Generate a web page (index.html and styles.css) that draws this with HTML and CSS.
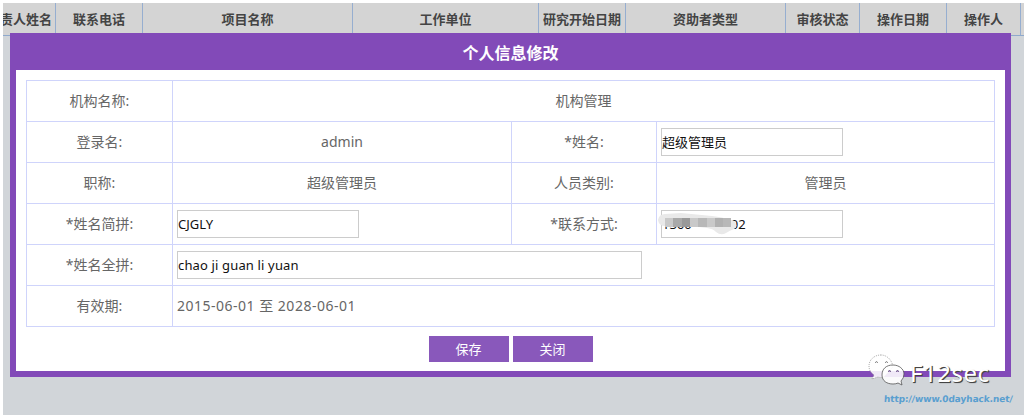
FILE: index.html
```html
<!DOCTYPE html>
<html lang="zh-CN">
<head>
<meta charset="utf-8">
<title>个人信息修改</title>
<link rel="stylesheet" href="styles.css">
</head>
<body>
<div class="page">
  <div class="list-head">
    <div class="col col-owner"><span>责人姓名</span></div>
    <div class="col">联系电话</div>
    <div class="col">项目名称</div>
    <div class="col">工作单位</div>
    <div class="col">研究开始日期</div>
    <div class="col">资助者类型</div>
    <div class="col">审核状态</div>
    <div class="col">操作日期</div>
    <div class="col">操作人</div>
    <div class="col"></div>
  </div>
  <div class="dialog">
    <div class="dialog-title">个人信息修改</div>
    <div class="dialog-body">
      <div class="form">
        <div class="cell">机构名称:</div><div class="cell wide">机构管理</div>
        <div class="cell">登录名:</div><div class="cell">admin</div><div class="cell">*姓名:</div><div class="cell field"><div class="input">超级管理员</div></div>
        <div class="cell">职称:</div><div class="cell">超级管理员</div><div class="cell">人员类别:</div><div class="cell">管理员</div>
        <div class="cell">*姓名简拼:</div><div class="cell field"><div class="input">CJGLY</div></div><div class="cell">*联系方式:</div>
        <div class="cell field"><div class="input phone">1360<span class="phone-end">02</span></div>
          <svg class="smudge" width="84" height="28" viewBox="0 0 84 28">
            <path d="M1 11Q2 5 8 5L24 4L55 7Q70 9 77 12Q82 17 77 20Q72 22 69 24Q64 27 59 23Q57 20 50 19L34 17L20 16L8 17Q2 17 1 11Z" fill="#e9e9e9"/>
            <path d="M8 9h8v9h-8zM32 9h9v9h-9z" fill="#c9c9c9"/>
            <path d="M16 9h9v9h-9z" fill="#a9a9a9"/>
            <path d="M25 9h8v9h-8z" fill="#999"/>
            <path d="M41 9h9v9h-9zM66 9h8v9h-8z" fill="#b8b8b8"/>
            <path d="M50 9h8v9h-8z" fill="#c9c9c9"/>
            <path d="M58 9h8v9h-8z" fill="#b1b1b1"/>
          </svg>
        </div>
        <div class="cell">*姓名全拼:</div><div class="cell wide field"><div class="input long">chao ji guan li yuan</div></div>
        <div class="cell">有效期:</div><div class="cell wide field dates">2015-06-01 至 2028-06-01</div>
      </div>
      <div class="actions"><div class="button">保存</div><div class="button">关闭</div></div>
    </div>
  </div>
  <div class="brand">
    <svg class="bubbles" width="37" height="33" viewBox="0 0 37 33">
      <path d="M13 1C6 1 1 6 1 12C1 16 3 19 6 21L4 25L10 23Q13 24 16 23L25 13C24 6 19 1 13 1Z" fill="#fff" fill-opacity=".88" stroke="#888" stroke-width=".7" stroke-dasharray="1 1"/>
      <path d="M25 11C18 11 14 15 14 21C14 27 19 30 25 30Q28 30 30 29L34 31L33 27Q36 24 36 20C36 15 31 11 25 11Z" fill="#fff" fill-opacity=".88" stroke="#555" stroke-width=".8"/>
      <path d="M7.200 8.600Q8.500 6.800 9.800 8.600M17.200 8.600Q18.500 6.800 19.800 8.600" fill="none" stroke="#666"/>
      <path d="M20 17.600Q21.500 15.500 23 17.600M28 17.600Q29.500 15.500 31 17.600" fill="#7649a5" stroke="#6a5780"/>
    </svg>
    <span class="brand-name">F12sec</span>
  </div>
  <div class="site">http://www.0dayhack.net/</div>
</div>
</body>
</html>
```
FILE: styles.css
```css
* { box-sizing: border-box; }
body { margin: 0; background: #fff; font-family: "Noto Sans", "Noto Sans CJK SC", sans-serif; }
.page { position: relative; width: 1024px; height: 415px; overflow: hidden; padding: 3px 0 0 3px; background: #d1d5d9; background-clip: content-box; }
.list-head { display: grid; grid-template-columns: 53px 87px 210px 186px 87px 160px 74px 87px 74px 1fr; height: 33px; background: #d4d4d4; border-bottom: 1px solid #8fa9cc; font: bold 13px "Noto Sans CJK SC", sans-serif; color: #444; }
.col { display: flex; align-items: center; justify-content: center; padding-bottom: 2px; border-right: 1px solid #96aed0; white-space: nowrap; overflow: hidden; }
.col:last-child { border: 0; }
.col-owner { justify-content: flex-end; padding-right: 3px; }
.dialog { position: absolute; left: 10px; top: 33px; width: 1001px; height: 344px; padding: 0 6px 6px; background: #824ab8; display: flex; flex-direction: column; }
.dialog-title { height: 37px; flex: none; display: flex; align-items: center; justify-content: center; color: #fff; font: bold 16px "Noto Sans CJK SC", sans-serif; padding-top: 1px; }
.dialog-body { flex: 1; background: #fff; padding: 10px 10px 0; }
.form { display: grid; grid-template-columns: 146px 339px 145px 338px; grid-auto-rows: 41px; width: 969px; border-top: 1px solid #cfd4fb; border-left: 1px solid #cfd4fb; }
.cell { display: flex; align-items: center; justify-content: center; border-right: 1px solid #cfd4fb; border-bottom: 1px solid #cfd4fb; font-size: 14px; line-height: 20px; color: #666; position: relative; padding-bottom: 1px; }
.wide { grid-column: span 3; }
.field { justify-content: flex-start; padding: 0 4px; }
.dates { letter-spacing: .5px; padding-bottom: 1px; }
.input { display: flex; align-items: center; width: 182px; height: 28px; border: 1px solid #ccc; color: #111; font-size: 13px; padding-bottom: 1px; }
.long { width: 465px; letter-spacing: .15px; }
.phone-end { margin-left: 39px; }
.smudge { position: absolute; left: 0; top: 5px; filter: blur(.4px); }
.actions { display: flex; justify-content: center; gap: 4px; margin-top: 9px; }
.button { width: 80px; height: 26px; background: #8958bb; color: #fff; font-size: 13px; line-height: 26px; text-align: center; }
.brand { position: absolute; left: 868px; top: 354px; display: flex; align-items: center; }
.brand-name { margin: 4px 0 0 5px; color: #fff; font: 24px/28px "Noto Sans", sans-serif; letter-spacing: .5px; text-shadow: 1px 1px 0 #444, 1px 1px 1px #555; }
.site { position: absolute; right: 11px; top: 392px; color: #5a9fd0; font: bold 9px/14px "DejaVu Sans", sans-serif; letter-spacing: -.1px; transform: skewX(-4deg); white-space: nowrap; }
```
